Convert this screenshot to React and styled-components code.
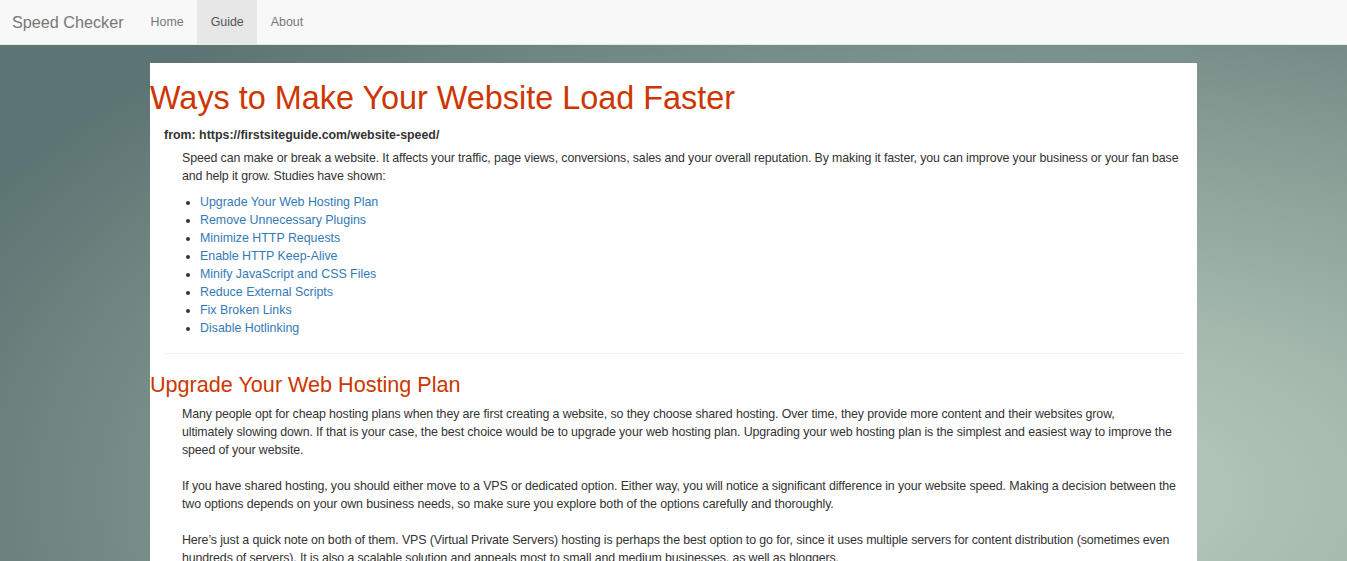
import * as React from 'react';
import styled, { createGlobalStyle } from 'styled-components';

const GlobalStyle = createGlobalStyle`
    html, body {
        margin: 0;
        padding: 0;
    }
    body {
        font-family: "Liberation Sans", Arial, Helvetica, sans-serif;
        font-size: 12.4px;
        line-height: 18px;
        color: #333;
        min-height: 100vh;
        background: radial-gradient(ellipse 90% 110% at 78% 88%, #b9ccbf 0%, #a4b9ac 30%, #879c94 60%, #5c7473 100%) fixed;
        background-color: #7d918b;
    }
    * {
        box-sizing: border-box;
    }
`

const Navbar = styled.nav`
    display: flex;
    align-items: stretch;
    height: 45px;
    padding-left: 12px;
    background-color: #f8f8f8;
    border-bottom: 1px solid #e7e7e7;
`
const Brand = styled.a`
    display: flex;
    align-items: center;
    padding-right: 13.5px;
    font-size: 16.2px;
    color: #777;
    text-decoration: none;
`
const NavList = styled.ul`
    display: flex;
    margin: 0;
    padding: 0;
    list-style: none;
`
const NavLink = styled.a`
    display: flex;
    align-items: center;
    height: 44px;
    padding: 0 13.5px;
    color: ${props => props.active ? '#555' : '#777'};
    background-color: ${props => props.active ? '#e7e7e7' : 'transparent'};
    text-decoration: none;
`
const Panel = styled.main`
    width: 1047px;
    margin: 18px 0 0 150px;
    padding-bottom: 40px;
    background-color: #fff;
`
const Title = styled.h1`
    margin: 0;
    padding-top: 18px;
    font-size: 32.4px;
    font-weight: 400;
    line-height: 1.1;
    color: #cd3600;
`
const SectionTitle = styled.h2`
    margin: 19px 0 9px;
    font-size: 21.6px;
    font-weight: 400;
    line-height: 1.1;
    color: #cd3600;
`
const Source = styled.div`
    margin: 9px 14px 5px;
    font-weight: 700;
`
const Body = styled.div`
    padding: 0 12px 0 32px;
`
const Para = styled.p`
    margin: 0 0 ${props => props.gap || '18px'};
    letter-spacing: -0.12px;
`
const List = styled.ul`
    margin: 0;
    padding-left: 18px;
    li {
        line-height: 18px;
    }
    a {
        color: #337ab7;
        text-decoration: none;
    }
`
const Rule = styled.hr`
    margin: 16px 14px 0;
    border: 0;
    border-top: 1px solid #eee;
`

const tips = [
    'Upgrade Your Web Hosting Plan',
    'Remove Unnecessary Plugins',
    'Minimize HTTP Requests',
    'Enable HTTP Keep-Alive',
    'Minify JavaScript and CSS Files',
    'Reduce External Scripts',
    'Fix Broken Links',
    'Disable Hotlinking'
];

const App = () => {
    return (
        <>
            <GlobalStyle />
            <Navbar>
                <Brand href='#'>Speed Checker</Brand>
                <NavList>
                    <li><NavLink href='#'>Home</NavLink></li>
                    <li><NavLink href='#' active>Guide</NavLink></li>
                    <li><NavLink href='#'>About</NavLink></li>
                </NavList>
            </Navbar>
            <Panel>
                <Title>Ways to Make Your Website Load Faster</Title>
                <Source>from: https://firstsiteguide.com/website-speed/</Source>
                <Body>
                    <Para gap='8px'>
                        Speed can make or break a website. It affects your traffic, page views, conversions, sales and your overall reputation. By making it faster, you can improve your business or your fan base and help it grow. Studies have shown:
                    </Para>
                    <List>
                        {tips.map((tip, i) => {
                            return <li key={i}><a href='#'>{tip}</a></li>
                        })}
                    </List>
                </Body>
                <Rule />
                <SectionTitle>Upgrade Your Web Hosting Plan</SectionTitle>
                <Body>
                    <Para>
                        Many people opt for cheap hosting plans when they are first creating a website, so they choose shared hosting. Over time, they provide more content and their websites grow,<br />
                        ultimately slowing down. If that is your case, the best choice would be to upgrade your web hosting plan. Upgrading your web hosting plan is the simplest and easiest way to improve the speed of your website.
                    </Para>
                    <Para>
                        If you have shared hosting, you should either move to a VPS or dedicated option. Either way, you will notice a significant difference in your website speed. Making a decision between the two options depends on your own business needs, so make sure you explore both of the options carefully and thoroughly.
                    </Para>
                    <Para>
                        Here’s just a quick note on both of them. VPS (Virtual Private Servers) hosting is perhaps the best option to go for, since it uses multiple servers for content distribution (sometimes even hundreds of servers). It is also a scalable solution and appeals most to small and medium businesses, as well as bloggers.
                    </Para>
                </Body>
            </Panel>
        </>
    )
}

export default App
